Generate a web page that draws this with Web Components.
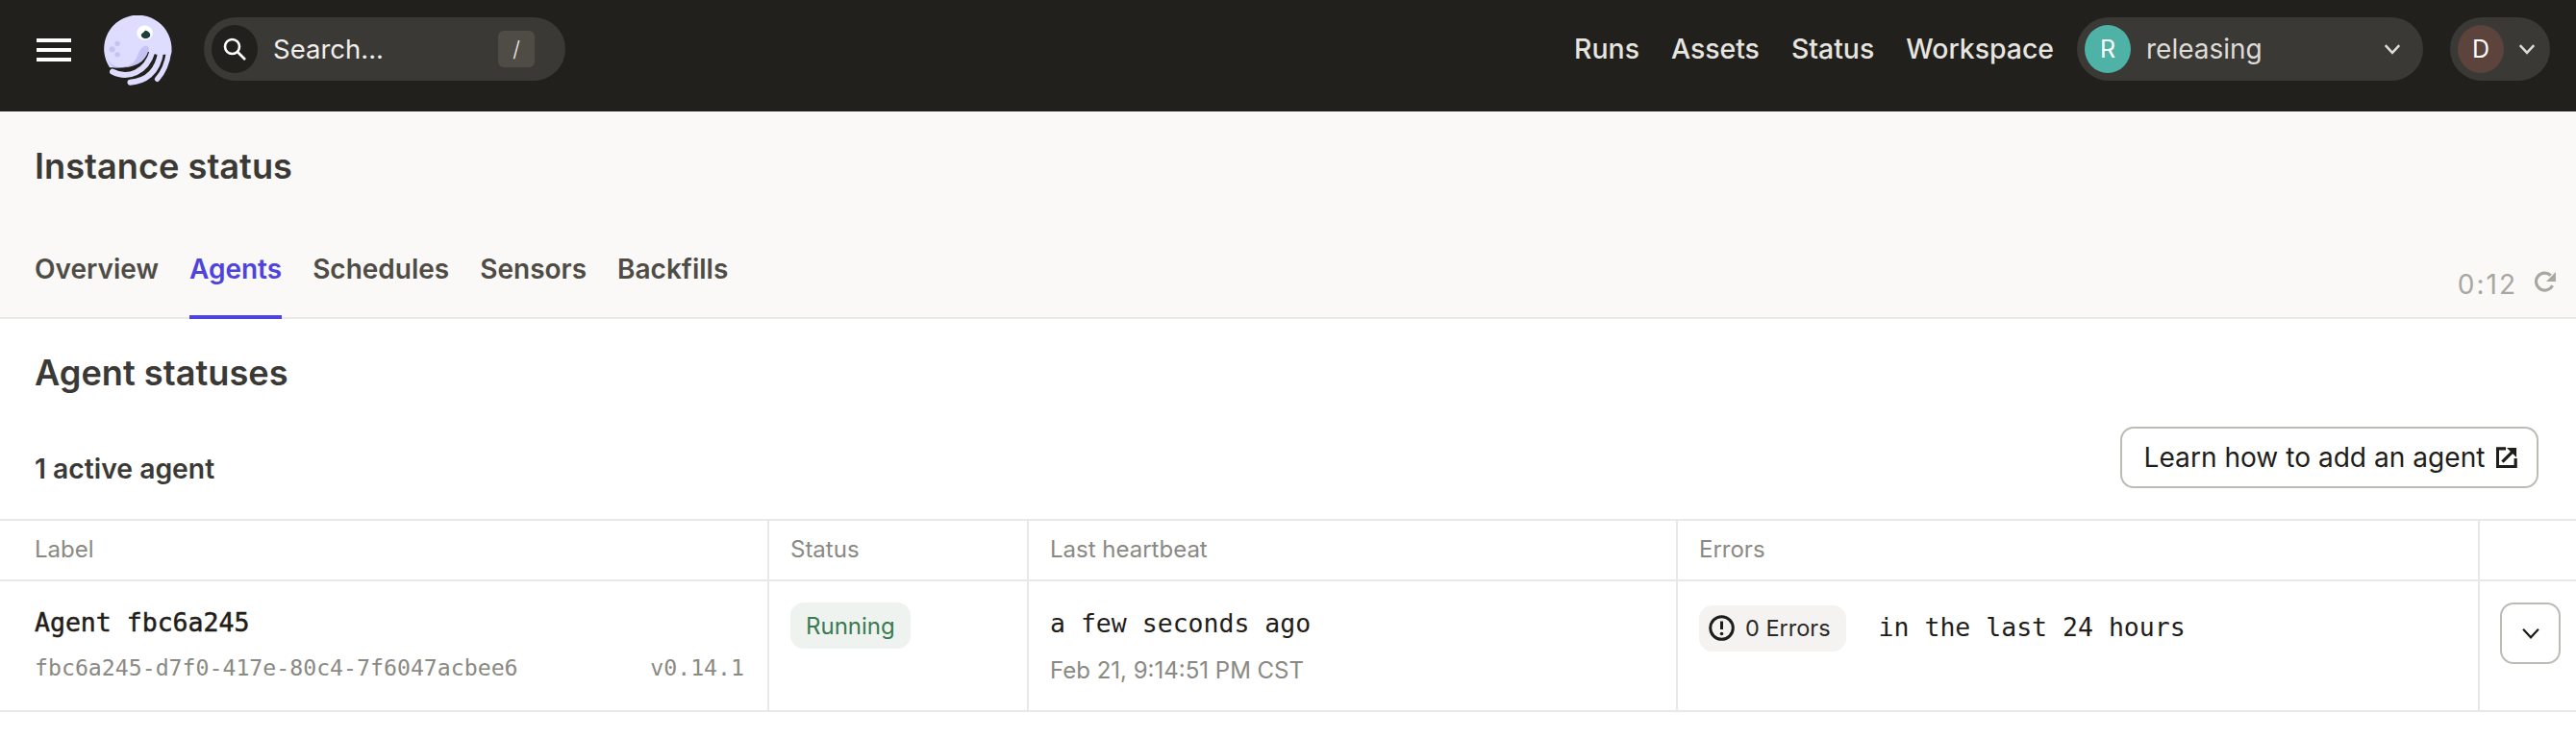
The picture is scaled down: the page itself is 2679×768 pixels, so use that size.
<!DOCTYPE html>
<html lang="en">
<head>
<meta charset="utf-8">
<title>Instance status</title>
<style>
html,body{margin:0;padding:0;background:#fff;font-family:Inter,"Liberation Sans",sans-serif;}
</style>
</head>
<body>
<app-topbar></app-topbar>
<page-header title="Instance status">
  <tab-link>Overview</tab-link>
  <tab-link active>Agents</tab-link>
  <tab-link>Schedules</tab-link>
  <tab-link>Sensors</tab-link>
  <tab-link>Backfills</tab-link>
</page-header>
<agents-section></agents-section>
<script>
const chevron=(s,w=3)=>`<svg width="${s}" height="${s}" viewBox="0 0 18 18" fill="none" stroke="currentColor" stroke-width="${w}"><path d="M2.5 5.5 9 12.5 15.5 5.500"/></svg>`;
function def(name,html,init){
  customElements.define(name,class extends HTMLElement{
    constructor(){super();const r=this.attachShadow({mode:'open'});r.innerHTML=typeof html==='function'?html(this):html;}
    connectedCallback(){
      if(typeof html==='function')this.shadowRoot.innerHTML=html(this);
      if(init)init(this);
    }
  });
}
def('dagster-logo',`<style>:host{display:block;width:72px;height:73px}svg{display:block}</style>
<svg width="72" height="73" viewBox="0 0 215 218">
  <path d="M18 162A105 105 0 1 1 209 122L190 122 163 122 135 112C125 150 90 165 25 162Z" fill="#dedcff"/>
  <path d="M10 135C30 170 80 170 100 135C108 118 112 100 128 95C138 93 142 102 138 112C125 150 90 166 30 162C20 155 14 145 10 135Z" fill="#c5c3f3"/>
  <path d="M27 175C75 200 132 177 151 112" fill="none" stroke="#dedcff" stroke-width="18" stroke-linecap="round"/>
  <path d="M82 208C125 205 167 182 177 112" fill="none" stroke="#dedcff" stroke-width="18" stroke-linecap="round"/>
  <path d="M166 198C182 180 197 150 202 112" fill="none" stroke="#dedcff" stroke-width="16" stroke-linecap="round"/>
  <ellipse cx="127" cy="54" rx="25" ry="23" fill="#fff"/>
  <path d="M116 60C119 53 125 54 128 47C134 47 144 52 144 62C144 70 132 73 125 72C119 70 115 65 116 60Z" fill="#1e3d3d"/>
  <circle cx="42" cy="88" r="8" fill="#c5c3f3"/><circle cx="26" cy="105" r="9" fill="#c5c3f3"/><circle cx="42" cy="122" r="8" fill="#c5c3f3"/>
</svg>`);
def('hamburger-icon',`<style>:host{display:flex;flex-direction:column;gap:6px;width:36px}i{display:block;height:4px;background:#fff}</style><i></i><i></i><i></i>`);
def('search-box',`<style>
:host{display:flex;align-items:center;width:376px;height:66px;box-sizing:border-box;padding:0 32px 0 8px;border-radius:33px;background:#3b3935;color:#f0efeb;font-size:27.500px}
.ic{width:48px;height:50px;border-radius:50%;background:#22201c;display:flex;align-items:center;justify-content:center}
.t{margin-left:16px;flex:1}
.k{width:38px;height:38px;border-radius:6px;background:#4f4c46;display:flex;align-items:center;justify-content:center;font-size:22px;font-weight:300}
</style><span class="ic"><svg width="26" height="26" viewBox="0 0 26 26" fill="none" stroke="#fff" stroke-width="2.6"><circle cx="10.5" cy="10.5" r="7.5"/><path d="M16 16l8 8"/></svg></span><span class="t">Search...</span><span class="k">/</span>`);
def('nav-link',`<style>:host{display:block;font-size:28.400px;font-weight:500;color:#e6e5e0;line-height:34px}</style><slot></slot>`);
def('avatar-dot',h=>`<style>:host{display:flex;align-items:center;justify-content:center;width:48px;height:50px;border-radius:50%;background:${h.getAttribute('color')};color:#fff;font-size:25px}</style><slot></slot>`);
def('workspace-pill',`<style>
:host{display:flex;align-items:center;width:360px;height:66px;box-sizing:border-box;padding:0 22px 0 8px;border-radius:33px;background:#3b3935;color:#dedcd7;font-size:28px;margin-left:24px}
.t{margin-left:16px;flex:1}svg{display:block}
</style><avatar-dot color="#4fb2a6">R</avatar-dot><span class="t">releasing</span><span>${chevron(20,2.2)}</span>`);
def('user-pill',`<style>
:host{display:flex;align-items:center;width:104px;height:66px;box-sizing:border-box;padding:0 12px 0 8px;border-radius:33px;background:#3b3935;color:#dedcd7;margin-left:28px;gap:14px}
svg{display:block}
</style><avatar-dot color="#5c433b">D</avatar-dot>${chevron(20,2.2)}`);
def('app-topbar',`<style>
:host{display:flex;align-items:center;height:116px;box-sizing:border-box;padding:0 27px 0 38px;background:#22201c}
dagster-logo{margin-left:34px;margin-top:-12px}
search-box{margin-left:32px;margin-top:-14px}
.r{margin-left:auto;display:flex;align-items:center;margin-top:-14px}
hamburger-icon{margin-top:-12px}
.n{display:flex;gap:33px}
</style>
<hamburger-icon></hamburger-icon><dagster-logo></dagster-logo><search-box></search-box>
<div class="r"><div class="n"><nav-link>Runs</nav-link><nav-link>Assets</nav-link><nav-link>Status</nav-link><nav-link>Workspace</nav-link></div><workspace-pill></workspace-pill><user-pill></user-pill></div>`);
def('tab-link',h=>{const a=h.hasAttribute('active');return `<style>
:host{display:block;height:104px;box-sizing:border-box;padding-top:34px;border-bottom:4px solid ${a?'#4f43dd':'transparent'};font-size:28px;font-weight:600;line-height:36px;color:${a?'#4f43dd':'#4f4c46'}}
</style><slot></slot>`});
def('refresh-timer',`<style>
:host{display:flex;align-items:center;gap:18px;color:#a8a7a0;font-size:28px;line-height:36px;font-weight:400;letter-spacing:2px}
svg{display:block;margin-top:-5px}
</style><span>0:12</span><svg width="23" height="23" viewBox="1.500 1 22 22" fill="none"><path d="M19.2 15.5A8.6 8.6 0 1 1 17.5 5.4" stroke="currentColor" stroke-width="3"/><path d="M22.5 2v9.5H13z" fill="currentColor"/></svg>`);
def('page-header',h=>`<style>
:host{display:block;height:216px;box-sizing:border-box;background:#faf9f7;border-bottom:2px solid #e8e8e6;padding:0 20px 0 36px}
h1{margin:0;box-sizing:border-box;padding-top:33px;height:79px;font-size:36.200px;line-height:48px;font-weight:600;color:#3b3935}
.b{display:flex;align-items:flex-end;justify-content:space-between;margin-top:33px;height:104px}
.tabs{display:flex;gap:32px}
refresh-timer{margin-bottom:18px}
</style><h1>${h.getAttribute('title')}</h1><div class="b"><div class="tabs"><slot></slot></div><refresh-timer></refresh-timer></div>`);
def('status-tag',h=>`<style>
:host{display:inline-flex;align-items:center;height:48px;box-sizing:border-box;padding:0 16px;border-radius:14px;background:${h.getAttribute('bg')};color:${h.getAttribute('fg')};font-size:24px;gap:12px}
:host([icon]){padding-left:10px;gap:11px;font-size:23.500px}
</style><slot></slot>`);
def('outline-button',`<style>
:host{display:flex;align-items:center;justify-content:center;box-sizing:border-box;border:2px solid #bcbcb6;border-radius:14px;background:#fff;color:#1f1d19;font-size:28.100px;gap:12px;height:64px}
</style><slot></slot>`);
def('table-row',h=>`<style>
:host{display:grid;grid-template-columns:800px 270px 675px 834px 100px;box-sizing:border-box;height:${h.getAttribute('h')};border-bottom:2px solid #e8e8e6;${h.hasAttribute('top')?'border-top:2px solid #e8e8e6;':''}}
</style><slot></slot>`);
def('table-cell',h=>`<style>
:host{display:block;box-sizing:border-box;min-width:0;padding:${h.getAttribute('pad')||'0 24px'};${h.hasAttribute('last')?'':'border-right:2px solid #e8e8e6;'}}
:host([head]){display:flex;align-items:center;color:#8a8983;font-size:24px;padding-bottom:2px}
</style><slot></slot>`);
def('agents-section',`<style>
:host{display:block}
h2{margin:0;padding:32px 0 0 36px;font-size:36.200px;line-height:48px;font-weight:600;color:#3b3935}
.bar{display:flex;justify-content:space-between;align-items:flex-start;padding:32px 39px 32px 36px}
.count{font-size:28.300px;line-height:34px;font-weight:600;color:#3b3935;margin-top:27px}
outline-button{width:435px}
.link{padding-left:3px}
.m{font-family:"DejaVu Sans Mono","Liberation Mono",monospace}
.name{font-size:26.500px;line-height:42px;font-weight:400;-webkit-text-stroke:.5px #1f1d19;color:#1f1d19;display:block}
.meta{display:flex;justify-content:space-between;margin-top:8px;font-size:23.200px;line-height:36px;color:#8a8983}
.ago{font-size:26.500px;line-height:44px;color:#1f1d19;display:block}
.date{display:block;margin-top:11px;font-size:24px;line-height:32px;color:#8a8983}
.err{display:flex;align-items:center;gap:34px}
.last{font-size:26.500px;line-height:52px;color:#1f1d19;padding-bottom:1px}
svg{display:block}
.chev{width:63px;color:#1f1d19}
</style>
<h2>Agent statuses</h2>
<div class="bar"><div class="count">1 active agent</div><outline-button class="link">Learn how to add an agent <svg width="22" height="22" viewBox="0 0 24 24" fill="none"><path d="M11 2H1.5V22.500H22V13" stroke="#1f1d19" stroke-width="3.500"/><path d="M7 17 19 5" stroke="#1f1d19" stroke-width="3.500"/><path d="M12 1H23V12Z" fill="#1f1d19"/></svg></outline-button></div>
<table-row top h="65px"><table-cell head pad="0 24px 0 36px">Label</table-cell><table-cell head pad="0 22px">Status</table-cell><table-cell head pad="0 22px">Last heartbeat</table-cell><table-cell head pad="0 22px">Errors</table-cell><table-cell head last></table-cell></table-row>
<table-row h="136px">
  <table-cell pad="22px 24px 0 36px"><span class="name m">Agent fbc6a245</span><div class="meta m"><span>fbc6a245-d7f0-417e-80c4-7f6047acbee6</span><span>v0.14.1</span></div></table-cell>
  <table-cell pad="22px 24px 0 22px"><status-tag bg="#eff3f0" fg="#3a7a52">Running</status-tag></table-cell>
  <table-cell pad="22px 24px 0 22px"><span class="ago m">a few seconds ago</span><span class="date">Feb 21, 9:14:51 PM CST</span></table-cell>
  <table-cell pad="22px 24px 0 22px"><div class="err"><status-tag icon bg="#f4f3f1" fg="#2b2925"><svg width="27" height="27" viewBox="0 0 27 27" fill="none"><circle cx="13.500" cy="13.500" r="11.800" stroke="#1f1d19" stroke-width="3"/><path d="M13.500 6.500V15" stroke="#1f1d19" stroke-width="3"/><circle cx="13.500" cy="19.500" r="1.800" fill="#1f1d19"/></svg>0 Errors</status-tag><span class="last m">in the last 24 hours</span></div></table-cell>
  <table-cell last pad="22px 0 0 21px"><outline-button class="chev">${chevron(22,1.8)}</outline-button></table-cell>
</table-row>`);
</script>
</body>
</html>
